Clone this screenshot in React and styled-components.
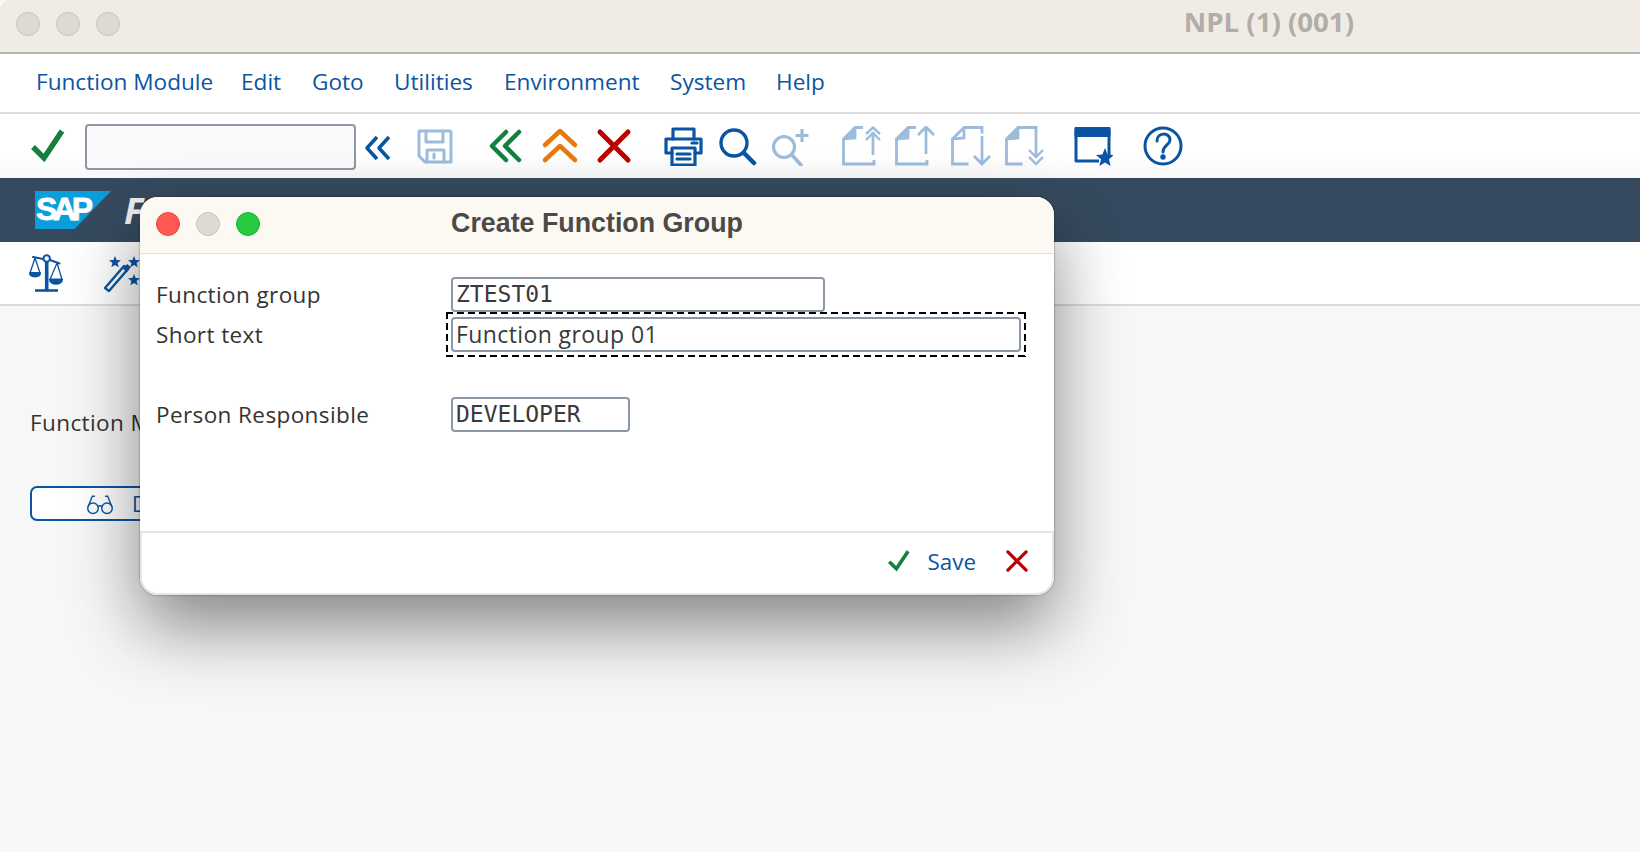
import React from 'react';
import styled, { createGlobalStyle } from 'styled-components';

const GlobalStyle = createGlobalStyle`
	html, body {
		margin: 0;
		padding: 0;
		background: #f7f7f7;
	}
`;

const BLUE = '#0a55a3';
const PALE = '#9dbbdb';
const GREEN = '#14803f';
const ORANGE = '#e8790f';
const RED = '#bb0000';
const uiFont = '"Open Sans", "Noto Sans", sans-serif';

// Page
const Page = styled.div`
	position: relative;
	display: flex;
	flex-direction: column;
	width: 1640px;
	height: 852px;
	overflow: hidden;
	background: #f7f7f7;
	font-family: ${uiFont};
`;

const TitleBar = styled.div`
	display: flex;
	align-items: center;
	flex: 0 0 54px;
	box-sizing: border-box;
	padding: 0 286px 4px 16px;
	background: #f0ebe5;
	border-bottom: 2px solid #b8b6b3;
	border-top-left-radius: 10px;
`;

const Lights = styled.div`
	display: flex;
	gap: 16px;
`;

const Light = styled.span`
	display: block;
	box-sizing: border-box;
	width: 24px;
	height: 24px;
	border-radius: 50%;
	background: ${(props) => props.$color || '#dedad3'};
	border: 1px solid ${(props) => props.$edge || '#c8c4bd'};
`;

const SystemName = styled.div`
	margin: -7px 0 0 auto;
	font: 700 27.6px ${uiFont};
	color: #b1ada7;
`;

const MenuBar = styled.nav`
	display: flex;
	align-items: center;
	flex: 0 0 60px;
	box-sizing: border-box;
	padding: 0 0 4px 36px;
	background: #fff;
	border-bottom: 2px solid #dcdcdc;
`;

const MenuItem = styled.span`
	width: ${(props) => props.$width}px;
	font-size: 22.6px;
	color: ${BLUE};
	white-space: nowrap;
`;

const ToolBar = styled.div`
	display: flex;
	align-items: center;
	flex: 0 0 64px;
	box-sizing: border-box;
	padding-left: 28px;
	background: linear-gradient(180deg, #fff 65%, #f8f8f8 100%);
`;

const Slot = styled.span`
	display: flex;
	flex: 0 0 40px;
	margin-left: ${(props) => props.$ml || 0}px;
`;

const CommandField = styled.div`
	box-sizing: border-box;
	width: 271px;
	height: 46px;
	margin: 2px 0 0 17px;
	background: #fafafa;
	border: 2px solid #8d98a6;
	border-radius: 4px;
`;

const Banner = styled.header`
	display: flex;
	align-items: center;
	flex: 0 0 64px;
	box-sizing: border-box;
	padding-left: 35px;
	background: #364a5f;
`;

const SapLogo = styled.div`
	flex: 0 0 76px;
	height: 38px;
	box-sizing: border-box;
	padding-left: 1px;
	background: #0a9edb;
	clip-path: polygon(0 0, 100% 0, 52% 100%, 0 100%);
	font: 700 32px/37px "Liberation Sans", sans-serif;
	letter-spacing: -4.4px;
	-webkit-text-stroke: 0.8px #fff;
	color: #fff;
`;

const ScreenTitle = styled.h1`
	margin: 0 0 0 13px;
	font: italic 700 36px ${uiFont};
	color: #eef0f2;
	white-space: nowrap;
`;

const SubBar = styled.div`
	display: flex;
	align-items: center;
	flex: 0 0 64px;
	box-sizing: border-box;
	padding-left: 26px;
	background: #fff;
	border-bottom: 2px solid #dcdcdc;
`;

const Content = styled.main`
	flex: 1;
	padding: 102px 0 0 30px;
`;

const FieldLabel = styled.div`
	font-size: 22.5px;
	line-height: 30px;
	letter-spacing: 0.4px;
	color: #333;
	white-space: nowrap;
`;

const DisplayButton = styled.div`
	display: flex;
	align-items: center;
	box-sizing: border-box;
	width: 300px;
	height: 35px;
	margin-top: 48px;
	padding-left: 54px;
	gap: 18px;
	background: #fff;
	border: 2px solid ${BLUE};
	border-radius: 7px;
	font-size: 21px;
	color: ${BLUE};
`;

// Dialog
const DialogShadow = styled.div`
	position: absolute;
	left: 140px;
	top: 197px;
	width: 914px;
	height: 398px;
	border-radius: 18px;
	box-shadow: 0 0 2px rgba(0, 0, 0, 0.55), 0 32px 70px rgba(0, 0, 0, 0.46);
`;

const Dialog = styled.section`
	position: absolute;
	left: 140px;
	top: 197px;
	display: flex;
	flex-direction: column;
	box-sizing: border-box;
	width: 914px;
	height: 398px;
	background: #fff;
	border-radius: 18px;
	overflow: hidden;
`;

const DialogHead = styled.div`
	position: relative;
	display: flex;
	align-items: center;
	justify-content: center;
	flex: 0 0 57px;
	box-sizing: border-box;
	padding-bottom: 3px;
	background: #fcf9f3;
	border-bottom: 1px solid #dfdedc;
`;

const DialogLights = styled(Lights)`
	position: absolute;
	left: 16px;
	top: 15px;
`;

const DialogTitle = styled.div`
	font: 700 26.8px "Liberation Sans", sans-serif;
	color: #4c4a47;
`;

const Form = styled.div`
	display: flex;
	flex-direction: column;
	flex: 1;
	padding: 23px 0 0 16px;
`;

const Row = styled.div`
	display: flex;
	align-items: center;
	height: 35px;
	margin-top: ${(props) => props.$top || 0}px;
`;

const RowLabel = styled(FieldLabel)`
	flex: 0 0 295px;
`;

const Field = styled.div`
	position: relative;
	box-sizing: border-box;
	width: ${(props) => props.$width}px;
	height: 35px;
	padding-left: 3px;
	background: #fff;
	border: 2px solid #8d98a6;
	border-radius: 4px;
	font: 23px/31px ${(props) => (props.$mono ? '"DejaVu Sans Mono", monospace' : uiFont)};
	letter-spacing: ${(props) => (props.$mono ? '0' : '0.4px')};
	color: #3a3a3a;
	white-space: nowrap;

	${(props) => props.$focused && `
		&::after {
			content: '';
			position: absolute;
			inset: -7px -7px -7px -7px;
			pointer-events: none;
			background:
				repeating-linear-gradient(90deg, #000 0 7px, transparent 7px 11px) top / 100% 2px no-repeat,
				repeating-linear-gradient(90deg, #000 0 7px, transparent 7px 11px) bottom / 100% 2px no-repeat,
				repeating-linear-gradient(180deg, #000 0 7px, transparent 7px 11px) left / 2px 100% no-repeat,
				repeating-linear-gradient(180deg, #000 0 7px, transparent 7px 11px) right / 2px 100% no-repeat;
		}
	`}
`;

const DialogFoot = styled.div`
	display: flex;
	align-items: center;
	justify-content: flex-end;
	flex: 0 0 64px;
	box-sizing: border-box;
	padding: 0 22px 4px 0;
	background: #fff;
	border: 2px solid #e6e6e6;
	border-bottom-left-radius: 18px;
	border-bottom-right-radius: 18px;
`;

const FootIcon = styled.span`
	display: flex;
`;

const SaveLabel = styled.span`
	margin: 0 28px 0 16px;
	font-size: 22.4px;
	color: ${BLUE};
`;

// Icons
const Svg = ({ size = 40, children, ...rest }) => (
	<svg width={size} height={size} viewBox="0 0 40 40" fill="none" strokeLinecap="round" strokeLinejoin="round" {...rest}>
		{children}
	</svg>
);

const Check = ({ size }) => (
	<Svg size={size} stroke={GREEN} strokeWidth="5.5">
		<path d="M5 21l11 11L34 5" strokeLinecap="butt" strokeLinejoin="miter" />
	</Svg>
);

const Cross = ({ size }) => (
	<Svg size={size} stroke={RED} strokeWidth="5">
		<path d="M6 6l28 28M34 6L6 34" />
	</Svg>
);

const DoubleLeft = ({ color, width }) => (
	<Svg stroke={color} strokeWidth={width}>
		<path d="M21 6L7 20l14 14M34 6L20 20l14 14" />
	</Svg>
);

const SmallDoubleLeft = () => (
	<Svg stroke={BLUE} strokeWidth="3.6">
		<path d="M19 11L9 22l10 11M31 11L21 22l10 11" strokeLinecap="butt" />
	</Svg>
);

const DoubleUp = () => (
	<Svg stroke={ORANGE} strokeWidth="4.5">
		<path d="M5 19L20 5l15 14M5 34l15-14 15 14" />
	</Svg>
);

const Floppy = () => (
	<Svg stroke={PALE} strokeWidth="3">
		<path d="M4 5h31a1 1 0 011 1v30H10l-6-6z" />
		<path d="M11 5v11h17V5M12 36V24h17v12" />
		<path d="M19 28v4" />
	</Svg>
);

const Printer = () => (
	<Svg stroke={BLUE} strokeWidth="3.2">
		<path d="M10 13V3h21v10" />
		<path d="M9 27H3V13h35v14h-6" />
		<path d="M9 22h23v17H9z" />
		<path d="M14 28h13M14 33h13M29 17h5" />
	</Svg>
);

const Glass = () => (
	<Svg stroke={BLUE} strokeWidth="3.4">
		<circle cx="17" cy="17" r="13" />
		<path d="M27 27l10 10" strokeWidth="4.5" />
	</Svg>
);

const GlassPlus = () => (
	<Svg stroke={PALE} strokeWidth="3.2">
		<circle cx="13" cy="21" r="10.5" />
		<path d="M21 29l9 10" strokeWidth="3.6" />
		<path d="M31 3v13M24.500 9.500h13" strokeLinecap="butt" />
	</Svg>
);

const DocUp = ({ double }) => (
	<Svg stroke={PALE} strokeWidth="2.8" strokeLinecap="butt" strokeLinejoin="miter">
		<path d="M1.500 13v25h30.500v-4M13 1.500h8" />
		<path d="M1.500 13L13 1.500V12z" fill={PALE} />
		{double ? (
			<>
				<path d="M31 6v23" />
				<path d="M24 14l7-7 7 7M24 8l7-6.500L38 8" strokeWidth="2.4" />
			</>
		) : (
			<path d="M31 2v26M23 9l8-8 8 8" />
		)}
	</Svg>
);

const DocDown = ({ double }) => (
	<Svg stroke={PALE} strokeWidth="2.8" strokeLinecap="butt" strokeLinejoin="miter">
		<path d="M1.500 13v25h16M13 1.500h18v6" />
		<path d="M1.500 13L13 1.500V12z" fill={double ? PALE : 'none'} />
		{double ? (
			<>
				<path d="M31 6v23" />
				<path d="M24 24l7 7 7-7M24 31l7 7 7-7" strokeWidth="2.4" />
			</>
		) : (
			<path d="M31 10v27M23 30l8 8 8-8" />
		)}
	</Svg>
);

const WindowStar = () => (
	<Svg>
		<path d="M36 3v26" stroke={BLUE} strokeWidth="3" strokeLinecap="butt" />
		<path d="M3 3v32h23" stroke={BLUE} strokeWidth="3" strokeLinecap="butt" />
		<rect x="1.500" y="1" width="36" height="10" rx="1" fill={BLUE} />
		<path d="M32 22l2.600 6.600 6.400.4-5 4.300 1.600 6.700-5.600-3.600-5.600 3.600 1.600-6.700-5-4.300 6.400-.4z" fill={BLUE} />
	</Svg>
);

const Help = () => (
	<Svg stroke={BLUE} strokeWidth="3">
		<circle cx="20" cy="20" r="18" />
		<path d="M14 15c0-9 13-9 13-1 0 5-7 5-7 12" />
		<circle cx="20" cy="31" r="1.200" fill={BLUE} />
	</Svg>
);

const Scales = () => (
	<Svg stroke={BLUE} strokeWidth="2">
		<circle cx="20.700" cy="5.500" r="3.200" />
		<path d="M20.700 9v28" strokeWidth="3.600" strokeLinecap="butt" />
		<path d="M9 37.500h23" strokeWidth="2.600" strokeLinecap="butt" />
		<path d="M7 4l10 2M24 7l9.500 3.500" />
		<path d="M9 5L4 20M9 5l5 15M31 10l-7 16.500M31 10l5 16.500" strokeWidth="1.300" />
		<path d="M4 20h10c0 4.500-10 4.500-10 0zM24 26.500h12c0 5.500-12 5.500-12 0z" fill={BLUE} />
	</Svg>
);

const Wand = () => (
	<Svg>
		<path d="M3 37l4 3 19-22-4-3z" stroke={BLUE} strokeWidth="2.400" transform="translate(0,-2)" />
		<path d="M21 18l4 3 4-5-4-3z" fill={BLUE} transform="translate(0,-2)" />
		<path d="M13 3l1.600 4 4.400.2-3.400 2.800 1.100 4.200L13 12l-3.700 2.200 1.100-4.200L7 7.200l4.400-.2z" fill={BLUE} />
		<path d="M32 3l1.600 4 4.400.2-3.400 2.800 1.100 4.200L32 12l-3.700 2.200 1.100-4.200L26 7.200l4.400-.2z" fill={BLUE} />
		<path d="M32 21l1.600 4 4.400.2-3.400 2.800 1.100 4.200L32 30l-3.700 2.200 1.100-4.200L26 25.200l4.400-.2z" fill={BLUE} />
	</Svg>
);

const Glasses = () => (
	<Svg size={28} stroke={BLUE} strokeWidth="2">
		<circle cx="10" cy="26" r="7.500" />
		<circle cx="30" cy="26" r="7.500" />
		<path d="M17 24c2-2 4-2 6 0M3 24L9 9h3M37 24L31 9h-3" />
	</Svg>
);

const menu = [
	['Function Module', 205],
	['Edit', 71],
	['Goto', 82],
	['Utilities', 110],
	['Environment', 166],
	['System', 106],
	['Help', 60],
];

const App = () => (
	<Page>
		<GlobalStyle />
		<TitleBar>
			<Lights>
				<Light />
				<Light />
				<Light />
			</Lights>
			<SystemName>NPL (1) (001)</SystemName>
		</TitleBar>
		<MenuBar>
			{menu.map(([label, width]) => (
				<MenuItem key={label} $width={width}>{label}</MenuItem>
			))}
		</MenuBar>
		<ToolBar>
			<Slot><Check /></Slot>
			<CommandField />
			<Slot $ml={2}><SmallDoubleLeft /></Slot>
			<Slot $ml={17}><Floppy /></Slot>
			<Slot $ml={30}><DoubleLeft color={GREEN} width="4.5" /></Slot>
			<Slot $ml={15}><DoubleUp /></Slot>
			<Slot $ml={14}><Cross /></Slot>
			<Slot $ml={29}><Printer /></Slot>
			<Slot $ml={14}><Glass /></Slot>
			<Slot $ml={14}><GlassPlus /></Slot>
			<Slot $ml={31}><DocUp double /></Slot>
			<Slot $ml={13}><DocUp /></Slot>
			<Slot $ml={16}><DocDown /></Slot>
			<Slot $ml={14}><DocDown double /></Slot>
			<Slot $ml={28}><WindowStar /></Slot>
			<Slot $ml={30}><Help /></Slot>
		</ToolBar>
		<Banner>
			<SapLogo>SAP</SapLogo>
			<ScreenTitle>Function Builder: Initial Screen</ScreenTitle>
		</Banner>
		<SubBar>
			<Slot><Scales /></Slot>
			<Slot $ml={36}><Wand /></Slot>
		</SubBar>
		<Content>
			<FieldLabel>Function Module</FieldLabel>
			<DisplayButton>
				<Glasses />
				<span>Display</span>
			</DisplayButton>
		</Content>
		<DialogShadow />
		<Dialog>
			<DialogHead>
				<DialogLights>
					<Light $color="#ff5a52" $edge="#e5493f" />
					<Light />
					<Light $color="#27c93f" $edge="#1fb233" />
				</DialogLights>
				<DialogTitle>Create Function Group</DialogTitle>
			</DialogHead>
			<Form>
				<Row>
					<RowLabel>Function group</RowLabel>
					<Field $mono $width={374}>ZTEST01</Field>
				</Row>
				<Row $top={5}>
					<RowLabel>Short text</RowLabel>
					<Field $focused $width={570}>Function group 01</Field>
				</Row>
				<Row $top={45}>
					<RowLabel>Person Responsible</RowLabel>
					<Field $mono $width={179}>DEVELOPER</Field>
				</Row>
			</Form>
			<DialogFoot>
				<FootIcon><Check size={26} /></FootIcon>
				<SaveLabel>Save</SaveLabel>
				<FootIcon><Cross size={26} /></FootIcon>
			</DialogFoot>
		</Dialog>
	</Page>
);

export default App;
